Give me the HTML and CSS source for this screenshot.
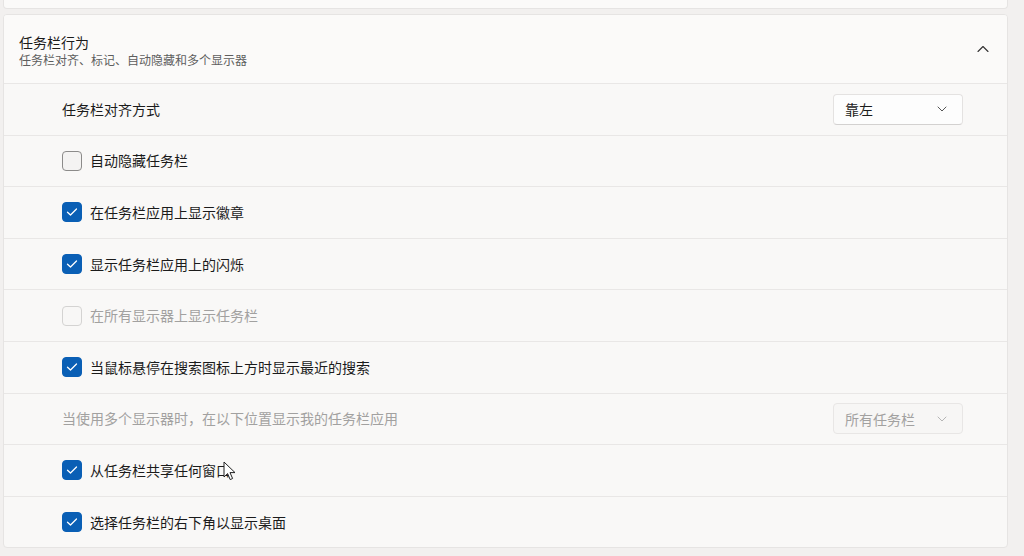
FILE: index.html
```html
<!DOCTYPE html>
<html lang="zh-CN">
<head>
<meta charset="utf-8">
<link rel="stylesheet" href="styles.css">
</head>
<body>
<div class="page">
  <div class="top-card"></div>
  <div class="expander">
    <div class="header">
      <div class="htext">
        <div class="title">任务栏行为</div>
        <div class="subtitle">任务栏对齐、标记、自动隐藏和多个显示器</div>
      </div>
      <svg class="chev-up" width="12" height="8" viewBox="0 0 12 8"><path d="M1 6.5 L6 1.5 L11 6.5" fill="none" stroke="#333" stroke-width="1.1" stroke-linecap="round" stroke-linejoin="round"/></svg>
    </div>
    <div class="row">
      <span class="label">任务栏对齐方式</span>
      <div class="combo"><span>靠左</span><svg width="10" height="6" viewBox="0 0 10 6"><path d="M1 1 L5 5 L9 1" fill="none" stroke="#555" stroke-width="1" stroke-linecap="round" stroke-linejoin="round"/></svg></div>
    </div>
    <div class="row">
      <span class="cb"></span><span class="label">自动隐藏任务栏</span>
    </div>
    <div class="row">
      <span class="cb on"><svg width="12" height="10" viewBox="0 0 12 10"><path d="M1.5 5.2 L4.5 8 L10.5 2" fill="none" stroke="#fff" stroke-width="1.3" stroke-linecap="round" stroke-linejoin="round"/></svg></span><span class="label">在任务栏应用上显示徽章</span>
    </div>
    <div class="row">
      <span class="cb on"><svg width="12" height="10" viewBox="0 0 12 10"><path d="M1.5 5.2 L4.5 8 L10.5 2" fill="none" stroke="#fff" stroke-width="1.3" stroke-linecap="round" stroke-linejoin="round"/></svg></span><span class="label">显示任务栏应用上的闪烁</span>
    </div>
    <div class="row">
      <span class="cb off-dis"></span><span class="label dis">在所有显示器上显示任务栏</span>
    </div>
    <div class="row">
      <span class="cb on"><svg width="12" height="10" viewBox="0 0 12 10"><path d="M1.5 5.2 L4.5 8 L10.5 2" fill="none" stroke="#fff" stroke-width="1.3" stroke-linecap="round" stroke-linejoin="round"/></svg></span><span class="label">当鼠标悬停在搜索图标上方时显示最近的搜索</span>
    </div>
    <div class="row">
      <span class="label dis">当使用多个显示器时，在以下位置显示我的任务栏应用</span>
      <div class="combo dis-combo"><span>所有任务栏</span><svg width="10" height="6" viewBox="0 0 10 6"><path d="M1 1 L5 5 L9 1" fill="none" stroke="#b5b5b5" stroke-width="1" stroke-linecap="round" stroke-linejoin="round"/></svg></div>
    </div>
    <div class="row cursor-row">
      <span class="cb on"><svg width="12" height="10" viewBox="0 0 12 10"><path d="M1.5 5.2 L4.5 8 L10.5 2" fill="none" stroke="#fff" stroke-width="1.3" stroke-linecap="round" stroke-linejoin="round"/></svg></span><span class="label">从任务栏共享任何窗口</span>
      <svg class="cursor" width="14" height="21" viewBox="0 0 14 21"><path d="M1 1 L1 16 L4.6 12.6 L7.2 18.6 L9.6 17.5 L7 11.6 L12 11.6 Z" fill="#fff" stroke="#222" stroke-width="1" stroke-linejoin="round"/></svg>
    </div>
    <div class="row">
      <span class="cb on"><svg width="12" height="10" viewBox="0 0 12 10"><path d="M1.5 5.2 L4.5 8 L10.5 2" fill="none" stroke="#fff" stroke-width="1.3" stroke-linecap="round" stroke-linejoin="round"/></svg></span><span class="label">选择任务栏的右下角以显示桌面</span>
    </div>
  </div>
</div>
</body>
</html>
```

FILE: styles.css
```css
html, body {
  margin: 0;
  padding: 0;
}
body {
  background: #f2f0ef;
  font-family: "Noto Sans CJK SC", "Noto Sans", sans-serif;
  color: #1b1b1b;
  width: 1024px;
  height: 556px;
  overflow: hidden;
}
.page {
  display: flex;
  flex-direction: column;
  padding-left: 3px;
  width: 1005px;
}
.top-card {
  height: 9px;
  background: #fbfaf9;
  border: 1px solid #e6e4e3;
  border-top: none;
  border-radius: 0 0 4px 4px;
  box-sizing: border-box;
}
.expander {
  margin-top: 5px;
  border: 1px solid #e6e4e3;
  border-radius: 4px;
  background: #f9f8f7;
  display: flex;
  flex-direction: column;
  overflow: hidden;
}
.header {
  height: 68px;
  background: #fbfaf9;
  display: flex;
  align-items: center;
  justify-content: space-between;
  padding: 0 18px 0 15px;
}
.htext {
  display: flex;
  flex-direction: column;
  padding-top: 1px;
}
.title {
  font-size: 14px;
  line-height: 19px;
  color: #1b1b1b;
}
.subtitle {
  font-size: 12px;
  line-height: 15px;
  color: #5e5e5e;
}
.chev-up {
  display: block;
}
.row {
  height: 50.6px;
  border-top: 1px solid #e9e7e6;
  display: flex;
  align-items: center;
  padding: 0 44px 0 58px;
  position: relative;
}
.label {
  font-size: 14px;
  line-height: 20px;
  color: #1b1b1b;
  flex: 1;
  margin-top: -1px;
}
.label.dis {
  color: #a2a1a0;
}
.cb {
  width: 20px;
  height: 20px;
  box-sizing: border-box;
  border-radius: 4px;
  border: 1px solid #8c8b8a;
  background: #f4f3f2;
  margin-right: 8px;
  display: flex;
  align-items: center;
  justify-content: center;
  flex: none;
}
.cb.on {
  background: #0a5fb5;
  border-color: #0a5fb5;
}
.cb.off-dis {
  border-color: #d4d3d2;
  background: #f8f7f6;
}
.combo {
  width: 130px;
  height: 31px;
  box-sizing: border-box;
  border: 1px solid #e4e2e1;
  border-bottom-color: #d3d1d0;
  border-radius: 4px;
  background: #fdfdfd;
  display: flex;
  align-items: center;
  justify-content: space-between;
  padding: 0 15px 0 11px;
  font-size: 14px;
  color: #1b1b1b;
}
.combo svg {
  display: block;
}
.combo.dis-combo {
  background: #f7f6f5;
  border-color: #e8e6e5;
  color: #a2a1a0;
}
.cursor {
  position: absolute;
  left: 219px;
  top: 16px;
}
```
